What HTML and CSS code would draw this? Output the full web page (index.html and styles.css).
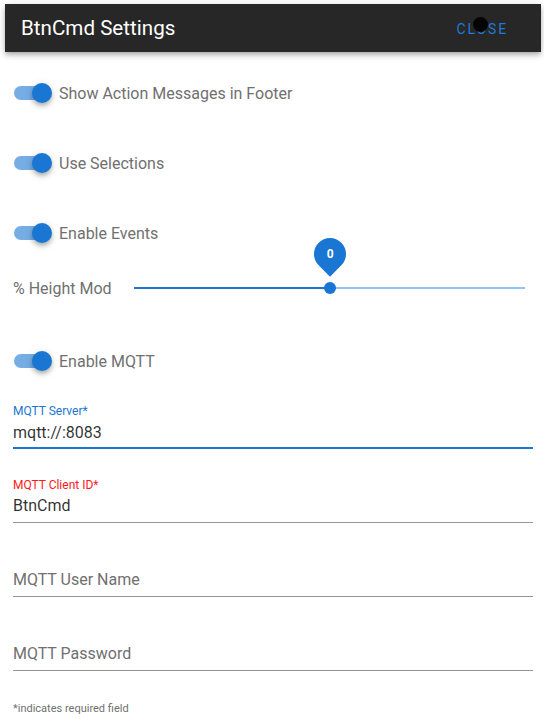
FILE: index.html
```html
<!DOCTYPE html>
<html lang="en">
<head>
<meta charset="utf-8">
<title>BtnCmd Settings</title>
<link rel="stylesheet" href="styles.css">
</head>
<body>
<header class="app-bar">
  <div class="app-title">BtnCmd Settings</div>
  <button class="close-btn">Close</button>
  <span class="cursor-dot"></span>
</header>
<main class="content">
  <div class="switch-row first">
    <span class="switch"><span class="track"></span><span class="thumb"></span></span>
    <span class="switch-label">Show Action Messages in Footer</span>
  </div>
  <div class="switch-row">
    <span class="switch"><span class="track"></span><span class="thumb"></span></span>
    <span class="switch-label">Use Selections</span>
  </div>
  <div class="switch-row">
    <span class="switch"><span class="track"></span><span class="thumb"></span></span>
    <span class="switch-label">Enable Events</span>
  </div>
  <div class="slider-row">
    <span class="slider-label">% Height Mod</span>
    <div class="slider">
      <div class="slider-track">
        <div class="slider-fill" style="width:50%"></div>
        <div class="slider-thumb" style="left:50%">
          <div class="thumb-label"><span>0</span></div>
        </div>
      </div>
    </div>
  </div>
  <div class="switch-row mqtt">
    <span class="switch"><span class="track"></span><span class="thumb"></span></span>
    <span class="switch-label">Enable MQTT</span>
  </div>
  <div class="field focused">
    <div class="field-label">MQTT Server*</div>
    <div class="field-value">mqtt://:8083</div>
  </div>
  <div class="field error">
    <div class="field-label">MQTT Client ID*</div>
    <div class="field-value">BtnCmd</div>
  </div>
  <div class="field">
    <div class="field-label"></div>
    <div class="field-value placeholder">MQTT User Name</div>
  </div>
  <div class="field">
    <div class="field-label"></div>
    <div class="field-value placeholder">MQTT Password</div>
  </div>
  <div class="note">*indicates required field</div>
</main>
</body>
</html>
```
FILE: styles.css
```css
* { box-sizing: border-box; }
html, body { margin: 0; padding: 0; background: #ffffff; }
body {
  font-family: Roboto, "Liberation Sans", Arial, sans-serif;
  width: 544px;
  height: 720px;
  overflow: hidden;
}

.app-bar {
  position: relative;
  margin: 4px 3px 0 5px;
  height: 48px;
  background: #272727;
  display: flex;
  align-items: center;
  justify-content: space-between;
  padding: 0 16px;
  box-shadow: 0 2px 4px -1px rgba(0,0,0,.2), 0 4px 5px 0 rgba(0,0,0,.14), 0 1px 10px 0 rgba(0,0,0,.12);
}
.app-title {
  color: #ffffff;
  font-size: 20.6px;
  line-height: 24px;
  font-weight: 400;
}
.close-btn {
  background: none;
  border: 0;
  padding: 0;
  margin-right: 17px;
  margin-top: 1px;
  font-family: inherit;
  font-size: 14px;
  font-weight: 400;
  text-transform: uppercase;
  letter-spacing: 1.9px;
  color: #1f7ad4;
}
.cursor-dot {
  position: absolute;
  top: 13px;
  right: 53px;
  width: 15px;
  height: 15px;
  border-radius: 50%;
  background: #050505;
}

.content {
  padding: 0 11px 0 13px;
}

.switch-row {
  height: 40px;
  display: flex;
  align-items: center;
  margin-top: 30px;
}
.switch-row.first { margin-top: 21px; }
.switch-row.mqtt { margin-top: 33px; }
.switch {
  position: relative;
  width: 40px;
  height: 20px;
  flex: none;
}
.track {
  position: absolute;
  left: 1px;
  top: 3px;
  width: 36px;
  height: 14px;
  border-radius: 7px;
  background: #75ade4;
}
.thumb {
  position: absolute;
  left: 19px;
  top: 0;
  width: 20px;
  height: 20px;
  border-radius: 50%;
  background: #1976d2;
  box-shadow: 0 2px 4px -1px rgba(0,0,0,.2), 0 4px 5px 0 rgba(0,0,0,.14), 0 1px 10px 0 rgba(0,0,0,.12);
}
.switch-label {
  margin-left: 6px;
  font-size: 16px;
  color: #707070;
}

.slider-row {
  height: 40px;
  margin-top: 15px;
  display: flex;
  align-items: center;
}
.slider-label {
  width: 121px;
  flex: none;
  font-size: 16px;
  color: #707070;
}
.slider {
  flex: 1;
  margin-right: 8px;
  height: 12px;
  display: flex;
  align-items: center;
}
.slider-track {
  position: relative;
  width: 100%;
  height: 2px;
  background: #8ec4f5;
}
.slider-fill {
  height: 2px;
  background: #1976d2;
}
.slider-thumb {
  position: absolute;
  top: -5px;
  width: 12px;
  height: 12px;
  margin-left: -6px;
  border-radius: 50%;
  background: #1976d2;
}
.thumb-label {
  position: absolute;
  left: -10px;
  top: -44px;
  width: 32px;
  height: 32px;
  background: #1976d2;
  border-radius: 50% 50% 0;
  transform: rotate(45deg);
  display: flex;
  align-items: center;
  justify-content: center;
}
.thumb-label span {
  transform: rotate(-45deg);
  color: #ffffff;
  font-size: 12px;
  font-weight: 700;
}

.field {
  margin-top: 28px;
  height: 46px;
  border-bottom: 1px solid rgba(0,0,0,.42);
}
.field.focused {
  margin-top: 22px;
  border-bottom: 2px solid #1976d2;
}
.field-label {
  height: 16px;
  font-size: 12px;
  line-height: 16px;
  color: #707070;
}
.field.focused .field-label { color: #1976d2; }
.field.error .field-label { color: #ff1a1a; }
.field-value {
  margin-top: 1px;
  height: 24px;
  font-size: 16px;
  line-height: 24px;
  color: rgba(0,0,0,.82);
}
.field.focused .field-value { margin-top: 2px; }
.field-value.placeholder { color: #707070; }

.note {
  margin-top: 30px;
  font-size: 11px;
  line-height: 16px;
  color: #707070;
}
```
